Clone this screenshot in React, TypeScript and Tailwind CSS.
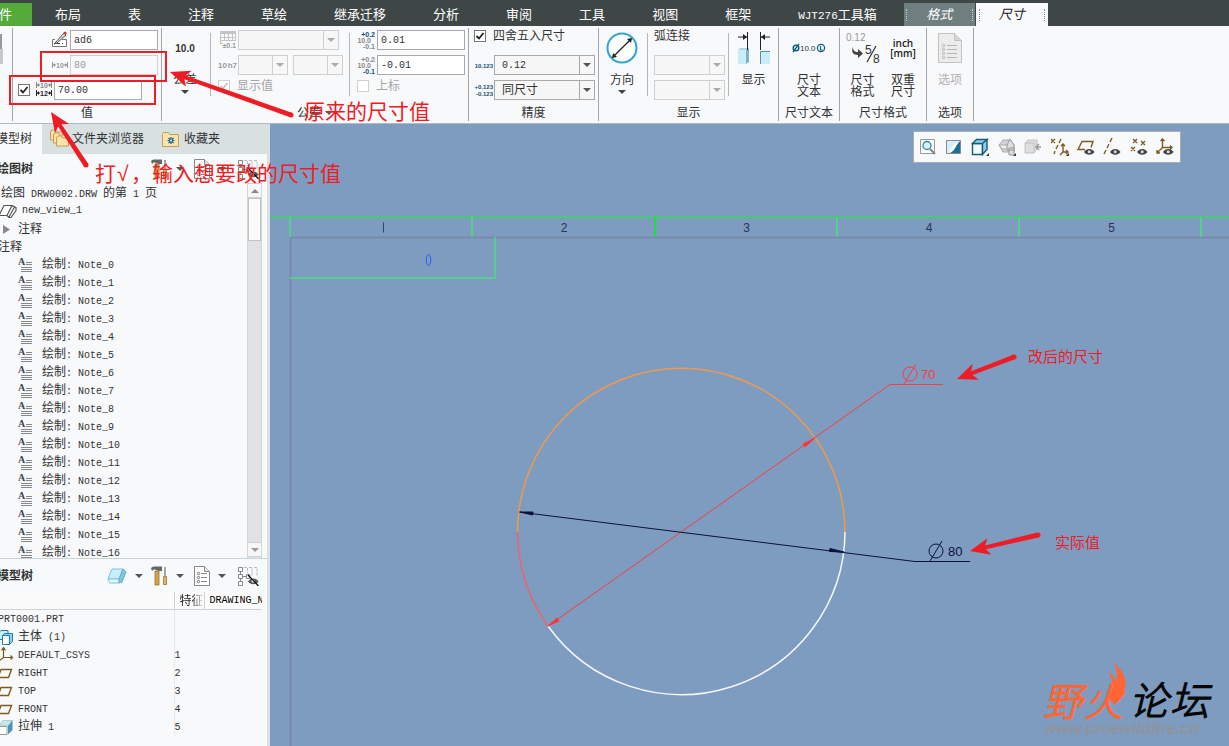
import React, { useState } from 'react';

const MENU_TABS = ['布局', '表', '注释', '草绘', '继承迁移', '分析', '审阅', '工具', '视图', '框架', 'WJT276工具箱'];

const NOTES = Array.from({ length: 17 }, (_, i) => `绘制: Note_${i}`);

type ModelIcon = 'none' | 'body' | 'csys' | 'plane' | 'extrude';

const MODEL_ROWS: { name: string; id: string; icon: ModelIcon }[] = [
  { name: 'PRT0001.PRT', id: '', icon: 'none' },
  { name: '主体 (1)', id: '', icon: 'body' },
  { name: 'DEFAULT_CSYS', id: '1', icon: 'csys' },
  { name: 'RIGHT', id: '2', icon: 'plane' },
  { name: 'TOP', id: '3', icon: 'plane' },
  { name: 'FRONT', id: '4', icon: 'plane' },
  { name: '拉伸 1', id: '5', icon: 'extrude' },
];

const RED = '#ee1c24';

// Latin runs are set in a narrower monospace so they take half a CJK cell
function Mixed({ text }: { text: string }) {
  return (
    <>
      {text.split(/([\x20-\x7e]+)/).map((part, i) =>
        i % 2 === 1 ? (
          <span key={i} className="whitespace-pre font-['Liberation_Mono',monospace] text-[10px]">{part}</span>
        ) : (
          part
        )
      )}
    </>
  );
}

function Caret({ className = 'text-[#555]' }: { className?: string }) {
  return (
    <svg width="8" height="4" viewBox="0 0 8 4" className={`shrink-0 ${className}`} aria-hidden="true">
      <path d="M0 0h8L4 4z" fill="currentColor" />
    </svg>
  );
}

function Group({ caption, width, caret, children }: { caption?: string; width: string; caret?: boolean; children?: React.ReactNode }) {
  return (
    <section className={`my-[2px] flex shrink-0 flex-col border-r border-[#a3a6a8] pt-[2px] ${width}`}>
      <div className="flex h-[70px]">{children}</div>
      <div className="mt-[5px] flex h-4 items-center justify-center gap-1 leading-4">
        {caption}
        {caret && <Caret />}
      </div>
    </section>
  );
}

function Divider() {
  return <div className="mt-[3px] h-[63px] w-px shrink-0 bg-[#b4b7b9]" />;
}

function BigButton({ icon, lines, width, caret, disabled }: { icon: React.ReactNode; lines: string[]; width: string; caret?: boolean; disabled?: boolean }) {
  return (
    <button disabled={disabled} className={`flex shrink-0 flex-col items-center pt-[2px] disabled:text-[#b0b0b0] ${width}`}>
      <span className="flex h-8 items-center justify-center">{icon}</span>
      <span className="mt-[10px] leading-3">
        {lines.map((l) => (
          <span key={l} className="block">{l}</span>
        ))}
      </span>
      {caret && <Caret className="mt-1 text-[#444]" />}
    </button>
  );
}

function Field({ label, value, disabled }: { label: string; value: string; disabled?: boolean }) {
  const [text, setText] = useState(value);
  return (
    <input
      aria-label={label}
      value={text}
      disabled={disabled}
      onChange={(e) => setText(e.target.value)}
      className="h-5 w-[88px] border border-[#a9a9a9] bg-white px-[3px] font-['Liberation_Mono',monospace] text-[10px] text-[#333] disabled:border-[#d0d0d0] disabled:bg-[#f8f9fb] disabled:text-[#999]"
    />
  );
}

function Picker({ label, value, width, disabled }: { label: string; value?: string; width: string; disabled?: boolean }) {
  return (
    <div className={`flex h-5 shrink-0 border bg-[#f7f7f8] ${width} ${disabled ? 'border-[#cfcfcf]' : 'border-[#a9a9a9]'}`}>
      <select
        aria-label={label}
        disabled={disabled}
        className={`min-w-0 flex-1 appearance-none bg-transparent pl-[7px] ${value && /\d/.test(value) ? "font-['Liberation_Mono',monospace] text-[10px]" : 'text-[12px]'}`}
      >
        <option>{value ?? ''}</option>
      </select>
      <span className={`flex w-[15px] items-center justify-center border-l ${disabled ? 'border-[#cfcfcf] text-[#aaa]' : 'border-[#a9a9a9] text-[#555]'}`}>
        <Caret className="" />
      </span>
    </div>
  );
}

function Check({ label, checked, disabled }: { label: string; checked?: boolean; disabled?: boolean }) {
  return (
    <span className="relative flex size-3 shrink-0">
      <input
        id={label}
        type="checkbox"
        aria-label={label}
        defaultChecked={checked}
        disabled={disabled}
        className="peer size-3 appearance-none border border-[#777] bg-white disabled:border-[#d0d0d0]"
      />
      <svg viewBox="0 0 12 12" className="pointer-events-none absolute inset-0 hidden size-3 text-[#222] peer-checked:block peer-disabled:text-[#c4c4c4]" aria-hidden="true">
        <path d="M2.500 6 5 8.500 9.500 3" fill="none" stroke="currentColor" strokeWidth="1.800" />
      </svg>
    </span>
  );
}

/* ---- ribbon glyphs ---- */

function PencilIcon() {
  return (
    <svg width="19" height="18" viewBox="0 0 19 18">
      <path d="M4 8.500H1.500v7h14v-7H11" fill="#fff" stroke="#777" />
      <path d="M3 12.500h1m1 0h4m2 0h1" stroke="#444" />
      <path d="M4 12 13 2l2 2-9 8-3 1z" fill="#ddd" stroke="#555" />
      <path d="m12 2 2-1.500 2 1.500-1.500 2z" fill="#c0392b" />
    </svg>
  );
}

function NominalIcon({ double }: { double?: boolean }) {
  const row = (y: number, n: string, c: string) => (
    <g fill={c} stroke={c}>
      <path d={`M1.500 ${y - 3}v6M16.500 ${y - 3}v6M2 ${y}h3M13 ${y}h3`} fill="none" />
      <path d={`m2 ${y} 2-2v4zM16 ${y}l-2-2v4z`} stroke="none" />
      <text x="9" y={y + 3} fontSize="7" textAnchor="middle" stroke="none" className="font-['Liberation_Sans',sans-serif] font-bold">{n}</text>
    </g>
  );
  return (
    <svg width="19" height="18" viewBox="0 0 19 18">
      {double ? <>{row(4, '10', '#888')}{row(12, '12', '#222')}</> : row(9, '10', '#999')}
    </svg>
  );
}

function TolIcon({ rows, size = 7 }: { rows: [string, number, number, string][]; size?: number }) {
  return (
    <svg width="20" height="20" viewBox="0 0 20 20">
      {rows.map(([t, x, y, c]) => (
        <text key={t + y} x={x} y={y} fontSize={size} fill={c} textAnchor="end" className="font-['Liberation_Sans',sans-serif] font-bold">{t}</text>
      ))}
    </svg>
  );
}

function GridIcon() {
  return (
    <svg width="20" height="20" viewBox="0 0 20 20">
      <path d="M2 1h16v3H2z" fill="#c4c4c4" />
      <path d="M2.500 4v9M6.500 4v7M10.500 4v7M14.500 4v7M17.500 4v7M2 7.500h16M2 10.500h16M2 13.500h3" stroke="#c4c4c4" />
      <text x="18" y="18" fontSize="7" fill="#999" textAnchor="end" className="font-['Liberation_Sans',sans-serif] font-bold">±0.1</text>
    </svg>
  );
}

function DirectionIcon() {
  return (
    <svg width="32" height="32" viewBox="0 0 32 32">
      <circle cx="16" cy="16" r="14.500" fill="#fdfefe" stroke="#35a3cf" strokeWidth="2" />
      <path d="M7.500 24.500 25 7" stroke="#222" strokeWidth="1.200" />
      <path d="m6 26 1-5 4 4zM26 6l-1 5-4-4z" fill="#222" />
    </svg>
  );
}

function ShowIcon() {
  return (
    <svg width="34" height="34" viewBox="0 0 34 34">
      <path d="M1 6h9M33 6h-9" stroke="#222" />
      <path d="m10 6-4-3v6zM24 6l4-3v6z" fill="#222" />
      <path d="M1 19h8v14H1z" fill="#c9edf9" />
      <path d="m9 19 3-2v14l-3 2z" fill="#7fb2c8" />
      <path d="m1 19 2-2h9l-3 2z" fill="#a5d8ea" />
      <path d="M23 20h10v13H23z" fill="#c9edf9" />
      <path d="M23.500 33V20.500H33" fill="none" stroke="#5a8fa5" />
      <path d="M10.500 1v18M23.500 1v18" stroke="#222" />
    </svg>
  );
}

function DimTextIcon() {
  return (
    <svg width="34" height="14" viewBox="0 0 34 14" className="font-['Liberation_Sans',sans-serif]">
      <circle cx="4" cy="7" r="2.800" fill="none" stroke="#12607f" strokeWidth="1.500" />
      <path d="m1 11 6-8" stroke="#12607f" strokeWidth="1.300" />
      <text x="8" y="10" fontSize="8" fill="#333">10.0</text>
      <circle cx="29" cy="7" r="3.600" fill="none" stroke="#12607f" strokeWidth="1.300" />
      <path d="M28.500 5v4h2" fill="none" stroke="#12607f" strokeWidth="1.200" />
    </svg>
  );
}

function FormatIcon() {
  return (
    <svg width="34" height="34" viewBox="0 0 34 34" className="font-['Liberation_Sans',sans-serif]">
      <text x="0" y="10" fontSize="10" fill="#999">0.12</text>
      <path d="M7 16c0 4 2 5 5 5v-3l5 4.500-5 4.500v-3c-5 0-7-3-5-8z" fill="#444" />
      <text x="19" y="23" fontSize="12" fill="#333">5</text>
      <path d="m21 31 9-16" stroke="#333" strokeWidth="1.300" />
      <text x="27" y="32" fontSize="12" fill="#333">8</text>
    </svg>
  );
}

function OptionsIcon() {
  return (
    <svg width="24" height="30" viewBox="0 0 24 30">
      <path d="M.5.500h16l7 7v22H.5z" fill="#ececec" stroke="#c2c2c2" />
      <path d="M16.500.500v7h7" fill="#d5d5d5" stroke="#c2c2c2" />
      <path d="M9 12.500h10M9 16.500h10M9 20.500h10M9 24.500h10" stroke="#b4b4b4" />
      {[12, 16, 20, 24].map((y) => (
        <circle key={y} cx="5.500" cy={y + 0.5} r="1.200" fill="none" stroke="#b4b4b4" />
      ))}
    </svg>
  );
}

/* ---- tree glyphs ---- */

function HammerIcon() {
  return (
    <svg width="17" height="20" viewBox="0 0 17 20">
      <path d="M0 2c2-2 4-1.500 6-1.500h5V5H8L5 4C3 3 2 4 1 5z" fill="#666" />
      <path d="M4 5h4v14H4z" fill="#d6a34c" stroke="#8a6420" strokeWidth=".7" />
      <path d="M14 1v9" stroke="#888" strokeWidth="1.500" />
      <path d="M12.500 10.500h3v8h-3z" fill="#e3b55f" stroke="#8a6420" strokeWidth=".7" />
    </svg>
  );
}

function ListIcon() {
  return (
    <svg width="16" height="20" viewBox="0 0 16 20">
      <path d="M.5.500h10l5 5v14H.5z" fill="#fff" stroke="#888" />
      <path d="M10.500.500v5h5" fill="#e6e6e6" stroke="#888" />
      <path d="M7 7.500h6M7 11.500h6M7 15.500h6" stroke="#888" />
      {[7.5, 11.5, 15.5].map((y) => (
        <circle key={y} cx="4.500" cy={y} r="1.200" fill="none" stroke="#777" />
      ))}
    </svg>
  );
}

function FilterIcon() {
  return (
    <svg width="21" height="20" viewBox="0 0 21 20">
      <path d="M.5 1.500h4v4h-4zM.5 8.500h4v4h-4zM.5 15.500h4v4h-4zM8.500 8.500h3v4h-3zM2.500 6v2M2.500 13v2M5 10.500h3" fill="none" stroke="#888" />
      <path d="M6 1.500h4m1 0h3v9m2-9h3v9M9.500 2v5M11 10h2" fill="none" stroke="#bbb" strokeDasharray="3 1" />
      <path d="M10 15.500c2.500-4 8-4 10.500 0-2.500 3.500-8 3.500-10.500 0z" fill="#555" />
      <circle cx="15" cy="15" r="1.500" fill="#fff" />
      <path d="m10 9 10.500 11" stroke="#111" strokeWidth="1.300" />
    </svg>
  );
}

function EraserIcon() {
  return (
    <svg width="20" height="18" viewBox="0 0 20 18">
      <path d="M5 2h11l-4 10H1z" fill="#c8effb" stroke="#7cc4dc" />
      <path d="M1 12h11v4H3z" fill="#e9fafe" stroke="#7cc4dc" />
      <path d="m16 2 3 3-4 10-3 1v-4z" fill="#7fc6de" stroke="#62aec9" />
    </svg>
  );
}

function FolderIcon({ star }: { star?: boolean }) {
  if (star) {
    return (
      <svg width="18" height="17" viewBox="0 0 18 17">
        <path d="M.5 15.500V3.500l1-2h5l1 2h9v12z" fill="#fbe3ae" stroke="#c79c53" />
        <path d="M9 6v7M5.500 9.500h7M6.500 7l5 5M11.500 7l-5 5" stroke="#12607f" strokeWidth="1.200" />
        <circle cx="9" cy="9.500" r="1" fill="#fff" />
      </svg>
    );
  }
  return (
    <svg width="20" height="20" viewBox="0 0 20 20">
      {[0, 3, 6].map((d) => (
        <path key={d} d={`M${d + 0.5} ${d + 11}V${d + 3}l1-2h4l1 2h6v8z`} fill="#fbe3ae" stroke="#c79c53" />
      ))}
    </svg>
  );
}

function NoteIcon() {
  return (
    <svg width="15" height="14" viewBox="0 0 15 14" className="shrink-0">
      <text x="0" y="7" fontSize="10" fill="#444" className="font-['Liberation_Serif',serif] font-bold">A</text>
      <path d="M8 4.500h6M8 6.500h6M3 9.500h11M3 11.500h11M3 13.500h11" stroke="#888" />
    </svg>
  );
}

function ModelRowIcon({ icon }: { icon: ModelIcon }) {
  return (
    <svg width="14" height="17" viewBox="0 0 14 17" className="shrink-0">
      {icon === 'body' && (
        <>
          <path d="M-1 3.500 1 1.500h7v9h-9z" fill="#c8effb" stroke="#1d7fa6" />
          <path d="m2.500 6.500 2-2h8v8l-3 3v-9z" fill="#8fd4ec" stroke="#1d7fa6" />
          <path d="M2.500 6.500h7v9h-7z" fill="#fff" stroke="#1d7fa6" />
        </>
      )}
      {icon === 'csys' && (
        <path d="M3.500 11V1M1.500 3.500l2-3 2 3M3.500 10.500h9M10.500 8.500l2 2-2 2M3.500 10.500-1 14" fill="none" stroke="#7c5c1d" strokeWidth="1.200" />
      )}
      {icon === 'plane' && <path d="M1 4.500h10.500l-3 8H-2z" fill="none" stroke="#7c5c1d" strokeWidth="1.400" />}
      {icon === 'extrude' && (
        <>
          <path d="M-1 7.500h8v8h-8z" fill="#fff" stroke="#999" />
          <path d="m-1 6 4-4.500h9.500L8 7z" fill="#c8e6f1" stroke="#8bb" strokeWidth=".6" />
          <path d="m8 7 4.500-5.500V11L8 15.500z" fill="#4a94b5" />
        </>
      )}
    </svg>
  );
}

/* ---- view toolbar ---- */

const EYE = (
  <g>
    <path d="M7 14c2.500-4 8-4 10.500 0-2.500 3.500-8 3.500-10.500 0z" fill="#444" />
    <circle cx="12.200" cy="13.800" r="1.500" fill="#ddd" />
  </g>
);
const CORNER = <path d="M18 18v-3l-3 3z" fill="#333" />;
const BROWN = { fill: 'none', stroke: '#7c5c1d', strokeWidth: 1.4 };

const VIEW_TOOLS: { label: string; art: React.ReactNode }[] = [
  {
    label: '重新调整',
    art: (
      <>
        <path d="M1.500 1.500h14v14h-14z" fill="#fff" stroke="#999" />
        <circle cx="8" cy="7.500" r="4" fill="#d9f1fa" stroke="#2a86ab" strokeWidth="1.300" />
        <path d="m11 11 5 5" stroke="#888" strokeWidth="2.200" />
      </>
    ),
  },
  {
    label: '重画',
    art: (
      <>
        <path d="M1.500 2.500h14v13h-14z" fill="#fff" stroke="#888" />
        <path d="M15 3v12H5C10 13 10 8 15 3z" fill="#1d6f93" />
        <path d="M2 3h13C9 6 6 9 4 15H2z" fill="#d6effa" />
      </>
    ),
  },
  {
    label: '显示样式',
    art: (
      <>
        <path d="M1.500 5.500h10v11h-10z" fill="#f3fbfe" stroke="#145c7d" strokeWidth="1.400" />
        <path d="m1.500 5.500 4-4h10.500l-4.500 4zM11.500 5.500 16 1.500v10l-4.500 5z" fill="#8fd0e8" stroke="#145c7d" strokeWidth="1.400" />
        {CORNER}
      </>
    ),
  },
  {
    label: '已保存方向',
    art: (
      <>
        <path d="m1 7 4-5h7l4 5v7H5z" fill="#d4d4d4" stroke="#aaa" />
        <path d="M1 7h9v4H4z" fill="#eee" stroke="#aaa" />
        <path d="M9 7 12 1l4 6v5H9zM11 10h5v7h-5z" fill="#ddd" stroke="#999" />
        {CORNER}
      </>
    ),
  },
  {
    label: '视图管理器',
    art: (
      <>
        <path d="m1 5 3-3h9v9l-3 4H1z" fill="#dedede" stroke="#c0c0c0" />
        <path d="M1 5h9v10" fill="none" stroke="#c0c0c0" />
        <path d="M17 9h-5m3-3-3 3 3 3" fill="none" stroke="#999" strokeWidth="1.500" />
      </>
    ),
  },
  {
    label: '基准显示',
    art: (
      <>
        <path d="m0 1 4 4M4 1 0 5M10 1 8 5M7 7l-2 4M4 13l-1 3M12 6v8h5M15 12l2 2-2 2M12 14l-3 3M10 8l2-2 2 2" {...BROWN} />
        {CORNER}
      </>
    ),
  },
  { label: '平面显示', art: (<><path d="M8 11.500H1l4-8h11l-2 6" {...BROWN} />{EYE}</>) },
  { label: '轴显示', art: (<><path d="M9 0 7 4M6 6l-2 4M3 12l-2 4" {...BROWN} />{EYE}</>) },
  { label: '点显示', art: (<><path d="m3 1 4 4M7 1 3 5M11 3l4 4M15 3l-4 4M1 9l4 4M5 9l-4 4" {...BROWN} />{EYE}</>) },
  { label: '坐标系显示', art: (<><path d="M6.500 10V1M4.500 3l2-2 2 2M6.500 9.500H16M14 7.500l2 2-2 2M6.500 9.500 1 15M1 12v3h3" {...BROWN} />{EYE}</>) },
];

function TreeHeader({ title, eraser, className }: { title: string; eraser?: boolean; className: string }) {
  return (
    <div className={`flex shrink-0 items-center justify-between bg-[#f6fafb] pr-2 ${className}`}>
      <h2 className="-ml-[3px] text-[12px] font-bold text-[#333]">{title}</h2>
      <div className="flex items-center gap-2 text-[#555]">
        {eraser && <><button aria-label="清除"><EraserIcon /></button><Caret /></>}
        <button aria-label="设置"><HammerIcon /></button>
        <Caret />
        <button aria-label="显示" className="ml-[2px]"><ListIcon /></button>
        <Caret />
        <button aria-label="过滤" className="ml-1"><FilterIcon /></button>
      </div>
    </div>
  );
}

function Ribbon() {
  return (
    <div className="flex h-[98px] shrink-0 overflow-hidden border-b border-[#a9bcc0] bg-[#f8f9fb]">
      <Group width="w-[13px]">
        <div className="mt-1 flex h-[30px] w-[3px] flex-col">
          <span className="h-[15px] w-[2px] bg-[#999]" />
          <span className="h-[15px] bg-[#c8c8c8]" />
        </div>
      </Group>

      <Group caption="值" width="w-[149px]">
        <div className="flex flex-col gap-[5px]">
          <div className="flex items-center pl-[38px]"><PencilIcon /><Field label="名称" value="ad6" /></div>
          <div className="flex items-center pl-[38px]"><NominalIcon /><Field label="公称值" value="80" disabled /></div>
          <div className="flex items-center gap-[5px] pl-[5px]">
            <Check label="覆盖值" checked />
            <div className="flex items-center"><NominalIcon double /><Field label="替代值" value="70.00" /></div>
          </div>
        </div>
      </Group>

      <Group caption="公差" width="w-[307px]" caret>
        <BigButton
          width="w-[46px]"
          caret
          lines={['公差']}
          icon={<span className="font-['Liberation_Sans',sans-serif] text-[10px] font-bold text-[#333]">10.0</span>}
        />
        <span className="w-[2px]" />
        <Divider />
        <div className="flex w-[138px] flex-col gap-[5px] pl-[7px]">
          <div className="flex"><GridIcon /><Picker label="公差表" width="w-[101px]" disabled /></div>
          <div className="flex">
            <TolIcon size={8} rows={[['10', 9, 13, '#999'], ['h7', 19, 13, '#999']]} />
            <Picker label="公差等级" width="w-[50px]" disabled />
            <span className="w-[5px]" />
            <Picker label="公差值" width="w-[50px]" disabled />
          </div>
          <label className="flex items-start gap-[7px] leading-3 text-[#a5a5a5]"><Check label="显示值" checked disabled />显示值</label>
        </div>
        <Divider />
        <div className="flex flex-col gap-[5px] pl-[7px]">
          <div className="flex">
            <TolIcon rows={[['+0.2', 18, 7, '#12507a'], ['10.0', 14, 13, '#888'], ['-0.1', 18, 19, '#888']]} />
            <Field label="上公差" value="0.01" />
          </div>
          <div className="flex">
            <TolIcon rows={[['+0.2', 18, 7, '#888'], ['10.0', 14, 13, '#888'], ['-0.1', 18, 19, '#12507a']]} />
            <Field label="下公差" value="-0.01" />
          </div>
          <label className="flex items-start gap-[7px] leading-3 text-[#a5a5a5]"><Check label="上标" disabled />上标</label>
        </div>
      </Group>

      <Group caption="精度" width="w-[130px]">
        <div className="flex flex-col gap-[5px] pl-[5px]">
          <label className="flex h-5 items-start gap-[7px] leading-3"><Check label="四舍五入尺寸" checked />四舍五入尺寸</label>
          <div className="flex"><TolIcon size={6} rows={[['10.123', 19, 13, '#12507a']]} /><Picker label="小数位数" value="0.12" width="w-[101px]" /></div>
          <div className="flex">
            <TolIcon size={6} rows={[['+0.123', 19, 9, '#12507a'], ['-0.123', 19, 16, '#12507a']]} />
            <Picker label="公差小数位数" value="同尺寸" width="w-[101px]" />
          </div>
        </div>
      </Group>

      <Group caption="显示" width="w-[180px]">
        <BigButton width="w-[46px]" caret lines={['方向']} icon={<DirectionIcon />} />
        <span className="w-[2px]" />
        <Divider />
        <div className="flex w-[81px] flex-col gap-[5px] pl-[6px]">
          <div className="h-5 leading-3">弧连接</div>
          <Picker label="弧连接类型" width="w-[71px]" disabled />
          <Picker label="弧连接方式" width="w-[71px]" disabled />
        </div>
        <Divider />
        <BigButton width="w-[49px]" lines={['显示']} icon={<ShowIcon />} />
      </Group>

      <Group caption="尺寸文本" width="w-[61px]">
        <BigButton width="w-[60px]" lines={['尺寸', '文本']} icon={<DimTextIcon />} />
      </Group>

      <Group caption="尺寸格式" width="w-[87px]">
        <BigButton width="w-[45px]" lines={['尺寸', '格式']} icon={<FormatIcon />} />
        <BigButton
          width="w-[36px]"
          lines={['双重', '尺寸']}
          icon={
            <span className="flex flex-col items-center font-['Open_Sans',sans-serif] text-[10px] leading-[10px] font-semibold text-[#222]">
              <span>inch</span>
              <span>[mm]</span>
            </span>
          }
        />
      </Group>

      <Group caption="选项" width="w-[47px]">
        <BigButton width="w-[46px]" lines={['选项']} icon={<OptionsIcon />} disabled />
      </Group>
    </div>
  );
}

function Sidebar() {
  return (
    <aside className="flex w-[270px] shrink-0 flex-col border-r-[3px] border-[#d8e0e1] bg-[#f8f9fb]">
      <div className="flex h-[30px] shrink-0 bg-[#d8e0e1]">
        <button className="flex w-[42px] items-center justify-end overflow-hidden bg-[#f8f9fb] pr-[10px] whitespace-nowrap">模型树</button>
        <button className="flex items-center gap-[2px] pl-2 whitespace-nowrap"><FolderIcon />文件夹浏览器</button>
        <button className="flex items-center gap-1 pl-[18px] whitespace-nowrap"><FolderIcon star />收藏夹</button>
      </div>

      <TreeHeader title="绘图树" className="h-[29px]" />

      <div className="flex min-h-0 flex-1">
        <ul className="min-w-0 flex-1 overflow-hidden pt-px leading-[18px] whitespace-nowrap">
          <li className="h-[18px] pl-[1px]"><Mixed text="绘图 DRW0002.DRW 的第 1 页" /></li>
          <li className="flex h-[18px] items-center gap-[5px]">
            <svg width="17" height="16" viewBox="0 0 17 16">
              <path d="M-1 12.500 4 2.500h8l-5 10zM12 2.500l4 2v3l-5 7H9l-2-2M9 14 14.500 4" fill="#fff" stroke="#555" strokeWidth="1.200" />
            </svg>
            <Mixed text="new_view_1" />
          </li>
          <li className="flex h-[18px] items-center gap-2 pl-[3px]">
            <svg width="7" height="9" viewBox="0 0 7 9"><path d="M0 0v9l7-4.500z" fill="#888" /></svg>
            注释
          </li>
          <li className="-ml-[2px] h-[18px]">注释</li>
          {NOTES.map((n) => (
            <li key={n} className="flex h-[18px] items-center gap-[9px] pl-[18px]">
              <NoteIcon />
              <span><Mixed text={n} /></span>
            </li>
          ))}
        </ul>
        <div className="mr-[5px] flex w-[15px] flex-col border-x border-[#d5d6d8] bg-[#e1e2e4]">
          <button aria-label="向上滚动" className="flex h-[15px] items-center justify-center border-y border-[#d0d0d0] bg-[#f6f6f7] text-[#888]"><Caret className="rotate-180" /></button>
          <div className="h-[43px] border border-[#c2c2c2] bg-[#fbfbfc]" />
          <button aria-label="向下滚动" className="mt-auto mb-px flex h-[15px] items-center justify-center border-y border-[#d0d0d0] bg-[#f6f6f7] text-[#999]"><Caret className="" /></button>
        </div>
      </div>

      <div className="h-[188px] shrink-0 border-t border-[#c9d3d4]">
        <TreeHeader title="模型树" eraser className="h-[33px]" />
        <div className="mr-[5px] overflow-hidden">
          <table className="w-full table-fixed border-collapse text-left whitespace-nowrap">
            <thead>
              <tr className="border-b border-[#cfd1d3] bg-[#fbfbfb]">
                <th className="w-[174px] border-r border-[#cfd1d3] p-0"><span className="sr-only">名称</span></th>
                <th className="w-[30px] border-r border-[#cfd1d3] p-0 pl-[5px] font-normal">
                  <div className="flex h-[17px] items-center">
                    <span className="bg-linear-to-r from-[#222] from-50% to-[#fbfbfb] bg-clip-text text-transparent">特征</span>
                  </div>
                </th>
                <th className="overflow-hidden p-0 pl-[5px] font-normal text-black">
                  <div className="flex h-[17px] items-center"><Mixed text="DRAWING_NAME" /></div>
                </th>
              </tr>
            </thead>
            <tbody>
              {MODEL_ROWS.map((r) => (
                <tr key={r.name}>
                  <td className="border-r border-[#e6e8ea] p-0">
                    <div className="flex h-[18px] items-center gap-1 leading-[18px]">
                      {r.icon !== 'none' && <ModelRowIcon icon={r.icon} />}
                      <span className={r.icon === 'none' ? '-ml-[2px]' : ''}><Mixed text={r.name} /></span>
                    </div>
                  </td>
                  <td className="p-0"><div className="flex h-[18px] items-center"><Mixed text={r.id} /></div></td>
                  <td className="p-0" />
                </tr>
              ))}
            </tbody>
          </table>
        </div>
      </div>
    </aside>
  );
}

function Sheet() {
  return (
    <svg
      width="959"
      height="622"
      viewBox="270 124 959 622"
      className="absolute top-0 left-0 overflow-visible font-['Liberation_Sans',sans-serif]"
      role="img"
      aria-label="工程图"
    >
      {/* sheet border and zone marks */}
      <path d="M290 237.500h3000M290.500 237v2000" fill="none" stroke="#7888a2" strokeWidth="1.500" />
      <path d="M270 216.500h3000" stroke="#12f52e" />
      <path d="M290 217v20M472 217v20M837 217v20M1019 217v20M1201 217v20M290 278h205v-41" fill="none" stroke="#49e07d" strokeWidth="1.500" />
      <path d="M655 217v20" stroke="#00f51c" strokeWidth="1.500" />
      <path d="M383.500 222.500v10" stroke="#34435f" />
      {['2', '3', '4', '5'].map((n, i) => (
        <text key={n} x={564 + i * 182.5} y="232" fontSize="12" textAnchor="middle" fill="#263552">{n}</text>
      ))}
      <ellipse cx="428.500" cy="260" rx="2.200" ry="5.500" fill="none" stroke="#2b5fff" />

      {/* circle: highlighted upper half, plain lower half */}
      <g fill="none" strokeWidth="1.500">
        <path d="M517.500 532a163.750 163.750 0 0 1 163.750-163.750a163.750 163.750 0 0 1 163.750 163.750" stroke="#f29a4a" />
        <path d="M845 532A163.750 163.750 0 0 1 548 626" stroke="#f4f7fa" />
        <path d="M517.500 532A163.750 163.750 0 0 0 548 626" stroke="#f2606c" />
      </g>

      {/* overridden dimension */}
      <g stroke="#fb3b3f" fill="none">
        <path d="M548 626 890 384.500h53" />
        <path d="m548 626 9-8 2 3zM815 438l-12 6 2 3z" fill="#fb3033" />
        <circle cx="910" cy="374" r="7" />
        <path d="m904 384 12-20" />
      </g>
      <text x="921" y="379" fontSize="13" fill="#fb3b3f">70</text>

      {/* true dimension */}
      <g stroke="#0b1238" fill="none">
        <path d="m519 512 396 49.500h55" />
        <path d="m520 512 13 0-.5 3zM844 552l-14-3.500-.5 3z" fill="#0b1238" />
        <circle cx="936" cy="551" r="7" />
        <path d="m930 561 12-20" />
      </g>
      <text x="948" y="556" fontSize="13" fill="#0b1238">80</text>
    </svg>
  );
}

function Watermark() {
  return (
    <svg width="199" height="86" viewBox="1030 660 199 86" className="absolute right-0 bottom-0" role="img" aria-label="野火论坛">
      <g className="font-['Noto_Sans_CJK_SC',sans-serif] font-light italic" fontSize="39" strokeWidth="1.200">
        <text x="1043" y="716" fill="#ff6633" stroke="#ff6633">野</text>
        <text x="1084" y="716" fill="#ff6633" stroke="#ff6633">火</text>
        <text x="1129" y="715" fill="#050505" stroke="#050505">论</text>
        <text x="1170" y="715" fill="#050505" stroke="#050505">坛</text>
      </g>
      <path d="M1113 662c10 8 14 17 12 26-2 7-8 11-12 15l-5-5c4-7 6-11 4-17-1-4-2-6-4-9 4 2 6 5 8 9 2-7 1-13-3-19z" fill="#ff6633" />
      <text x="1044" y="734" fontSize="16" fill="#8e949f" className="font-['Liberation_Sans',sans-serif] font-bold italic">www.proewildfire.cn</text>
    </svg>
  );
}

// Tapered shaft with a barbed head pointing at `tip`
function Arrow({ tip, tail }: { tip: [number, number]; tail: [number, number] }) {
  const len = Math.hypot(tail[0] - tip[0], tail[1] - tip[1]);
  const ux = (tail[0] - tip[0]) / len;
  const uy = (tail[1] - tip[1]) / len;
  const at = (along: number, side: number) => `${tip[0] + ux * along - uy * side},${tip[1] + uy * along + ux * side}`;
  return (
    <g fill={RED}>
      <polygon points={[at(0, 0), at(20, 8.5), at(16, 2), at(len, 2.5), at(len, -2.5), at(16, -2), at(20, -8.5)].join(' ')} />
      <circle cx={tail[0]} cy={tail[1]} r="2.500" />
    </g>
  );
}

function Markup() {
  return (
    <svg width="1229" height="746" viewBox="0 0 1229 746" className="pointer-events-none absolute top-0 left-0 font-['Noto_Sans_CJK_SC',sans-serif]">
      <g fill="none" stroke={RED} strokeWidth="2">
        <rect x="41" y="52" width="125" height="29" />
        <rect x="10" y="76" width="145" height="28" />
      </g>
      <Arrow tip={[170, 72]} tail={[291, 115]} />
      <Arrow tip={[51, 112]} tail={[86, 165]} />
      <Arrow tip={[957, 379]} tail={[1014, 357]} />
      <Arrow tip={[970, 551]} tail={[1038, 535]} />
      <g fill={RED}>
        <text x="304" y="119" fontSize="21">原来的尺寸值</text>
        <text x="95" y="181" fontSize="21">打</text>
        <text x="117" y="181" fontSize="21" className="font-['Liberation_Sans',sans-serif]">√</text>
        <text x="131" y="181" fontSize="21">，输入想要改的尺寸值</text>
        <text x="1028" y="362" fontSize="15">改后的尺寸</text>
        <text x="1055" y="548" fontSize="15">实际值</text>
      </g>
    </svg>
  );
}

export default function App() {
  return (
    <div className="relative flex h-screen flex-col overflow-hidden bg-[#7e9bc0] font-['Liberation_Sans','Noto_Sans_CJK_SC',sans-serif] text-[12px] text-[#333]">
      <nav className="flex h-[26px] shrink-0 items-end bg-[#3e4746] text-[13px] whitespace-nowrap text-white">
        <button className="flex h-[23px] w-8 items-center justify-end overflow-hidden bg-[#55ab3a] pr-5">文件</button>
        <div className="flex h-[23px] items-center gap-[47px] pr-[27px] pl-[23px]">
          {MENU_TABS.map((t) => (
            <button key={t}>
              {t.startsWith('WJT') ? <><span className="font-['Liberation_Mono',monospace] text-[11px]">WJT276</span>工具箱</> : t}
            </button>
          ))}
        </div>
        <button className="flex h-[23px] w-[71px] items-center justify-between bg-[#6f7f80] px-[2px] italic">
          <span className="h-3 border-l border-dotted border-[#ccc]" />格式<span className="h-3 border-l border-dotted border-[#ccc]" />
        </button>
        <button className="ml-px flex h-[23px] w-[72px] items-center justify-between bg-[#f8f9fb] px-[3px] text-[#222] italic">
          <span className="h-3 border-l border-dotted border-[#888]" />尺寸<span className="h-3 border-l border-dotted border-[#888]" />
        </button>
      </nav>

      <Ribbon />

      <div className="flex min-h-0 flex-1">
        <Sidebar />
        <main className="relative min-w-0 flex-1 overflow-hidden">
          <Sheet />
          <Watermark />
          <div className="absolute top-[7px] right-12 grid h-8 w-[268px] grid-cols-10 items-center justify-items-center border border-[#a8adb3] bg-[#f8f9fb] px-px">
            {VIEW_TOOLS.map((t) => (
              <button key={t.label} aria-label={t.label} title={t.label}>
                <svg width="19" height="19" viewBox="0 0 19 19">{t.art}</svg>
              </button>
            ))}
          </div>
        </main>
      </div>

      <Markup />
    </div>
  );
}
